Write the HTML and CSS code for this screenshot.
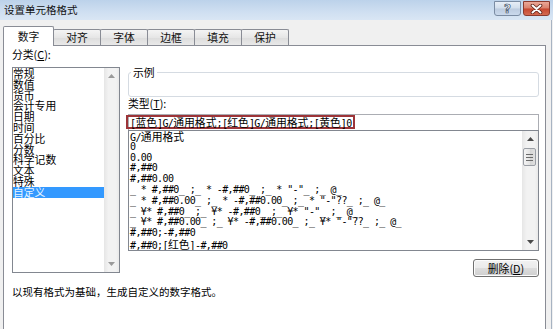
FILE: index.html
```html
<!DOCTYPE html>
<html>
<head>
<meta charset="utf-8">
<link rel="stylesheet" href="styles.css">
</head>
<body>
<div class="window">
  <div class="titlebar">
    <span class="title">设置单元格格式</span>
    <div class="tbtns">
      <div class="tbtn help"><span class="q">?</span></div>
      <div class="tbtn close">
        <svg width="13" height="10" viewBox="0 0 13 10"><path d="M2.5 1.5 L10.5 8.5 M10.5 1.5 L2.5 8.5" stroke="#5a1f16" stroke-width="3.6" stroke-linecap="round"/><path d="M2.5 1.5 L10.5 8.5 M10.5 1.5 L2.5 8.5" stroke="#ffffff" stroke-width="2" stroke-linecap="round"/></svg>
      </div>
    </div>
  </div>
  <div class="client">
    <div class="tabs">
      <div class="tab active">数字</div>
      <div class="tab">对齐</div>
      <div class="tab">字体</div>
      <div class="tab">边框</div>
      <div class="tab">填充</div>
      <div class="tab">保护</div>
    </div>
    <div class="panel">
      <div class="cols">
        <div class="left">
          <div class="label lbl-cat">分类(<u>C</u>):</div>
          <div class="listbox">
            <div class="items">
              <div class="item">常规</div>
              <div class="item">数值</div>
              <div class="item">货币</div>
              <div class="item">会计专用</div>
              <div class="item">日期</div>
              <div class="item">时间</div>
              <div class="item">百分比</div>
              <div class="item">分数</div>
              <div class="item">科学记数</div>
              <div class="item">文本</div>
              <div class="item">特殊</div>
              <div class="item selected">自定义</div>
            </div>
            <div class="vscroll narrow">
              <div class="arrow light"><svg width="7" height="4" viewBox="0 0 7 4"><path d="M0 4 L3.5 0 L7 4Z"/></svg></div>
              <div class="track"></div>
              <div class="arrow light"><svg width="7" height="4" viewBox="0 0 7 4"><path d="M0 0 L3.5 4 L7 0Z"/></svg></div>
            </div>
          </div>
        </div>
        <div class="right">
          <fieldset class="sample"><legend>示例</legend></fieldset>
          <div class="label lbl-type">类型(<u>T</u>):</div>
          <div class="input"><span class="sel">[<span class="c">蓝色</span>]G/<span class="c">通用格式</span>;[<span class="c">红色</span>]G/<span class="c">通用格式</span>;[<span class="c">黄色</span>]0</span></div>
          <div class="fmtlist">
            <div class="rows">
              <div class="row">G/<span class="c">通用格式</span></div>
              <div class="row">0</div>
              <div class="row">0.00</div>
              <div class="row">#,##0</div>
              <div class="row">#,##0.00</div>
              <div class="row">_ * #,##0_ ;_ * -#,##0_ ;_ * "-"_ ;_ @_ </div>
              <div class="row">_ * #,##0.00_ ;_ * -#,##0.00_ ;_ * "-"??_ ;_ @_ </div>
              <div class="row">_ ¥* #,##0_ ;_ ¥* -#,##0_ ;_ ¥* "-"_ ;_ @_ </div>
              <div class="row">_ ¥* #,##0.00_ ;_ ¥* -#,##0.00_ ;_ ¥* "-"??_ ;_ @_ </div>
              <div class="row">#,##0;-#,##0</div>
              <div class="row">#,##0;[<span class="c">红色</span>]-#,##0</div>
            </div>
            <div class="vscroll wide">
              <div class="arrow"><svg width="7" height="4" viewBox="0 0 7 4"><path d="M0 4 L3.5 0 L7 4Z"/></svg></div>
              <div class="track">
                <div class="thumb"><span></span><span></span><span></span></div>
              </div>
              <div class="arrow"><svg width="7" height="4" viewBox="0 0 7 4"><path d="M0 0 L3.5 4 L7 0Z"/></svg></div>
            </div>
          </div>
          <div class="btnrow"><div class="btn">删除(<u>D</u>)</div></div>
        </div>
      </div>
      <p class="hint">以现有格式为基础，生成自定义的数字格式。</p>
    </div>
  </div>
</div>
</body>
</html>
```
FILE: styles.css
```css
* { box-sizing: border-box; }
html, body { margin: 0; padding: 0; }
body {
  width: 553px;
  height: 329px;
  overflow: hidden;
  background: #f0f0f0;
  font-family: "Noto Sans CJK SC", sans-serif;
  font-size: 10.8px;
  color: #000;
}
.window {
  width: 553px;
  height: 329px;
  display: flex;
  flex-direction: column;
}
.titlebar {
  height: 20px;
  flex: none;
  display: flex;
  justify-content: space-between;
  align-items: flex-start;
  background: linear-gradient(#bcd2ea, #cfdff1 60%, #d9e6f4);
  padding: 0 3px 0 4px;
}
.title {
  font-size: 10.5px;
  line-height: 20px;
  color: #111;
}
.tbtns {
  display: flex;
  gap: 2px;
  margin-top: 1px;
}
.tbtn {
  width: 27px;
  height: 15px;
  border-radius: 0 0 3px 3px;
  display: flex;
  align-items: center;
  justify-content: center;
}
.help {
  border: 1px solid #7b8ca3;
  background: linear-gradient(#e7eef7, #d2deec 48%, #bccbdf 52%, #cad9ec);
}
.q {
  font-family: "DejaVu Sans", sans-serif;
  font-weight: bold;
  font-size: 12px;
  line-height: 12px;
  color: #f4f7fb;
  -webkit-text-stroke: 0.7px #3d4d63;
}
.close {
  border: 1px solid #8a3a2e;
  background: linear-gradient(#eaa898, #d9806c 48%, #c6462f 52%, #d46b52);
}
.client {
  flex: 1;
  display: flex;
  flex-direction: column;
  border-right: 1px solid #a7b3c2;
  width: 552px;
}
.tabs {
  height: 25px;
  flex: none;
  display: flex;
  align-items: flex-end;
  padding-left: 3px;
}
.tab {
  width: 48px;
  height: 16px;
  margin-left: -1px;
  border: 1px solid #898c95;
  border-bottom: none;
  border-radius: 2px 2px 0 0;
  background: linear-gradient(#f4f4f4, #e6e6e6 50%, #dcdcdc 51%, #e9e9e9);
  text-align: center;
  line-height: 15px;
  font-size: 10.8px;
  color: #111;
}
.tab.active {
  width: 51px;
  height: 20px;
  margin-left: 0;
  margin-bottom: -1px;
  background: #fff;
  position: relative;
  z-index: 1;
  line-height: 19px;
}
.tab.active + .tab { margin-left: -1px; }
.panel {
  flex: 1;
  margin-left: 3px;
  width: 543px;
  background: #fff;
  border: 1px solid #898c95;
  border-bottom: none;
  padding: 0 6px 0 8px;
}
.cols {
  display: flex;
  gap: 8px;
}
.left {
  width: 108px;
  flex: none;
}
.right {
  flex: 1;
  display: flex;
  flex-direction: column;
}
.label {
  line-height: 12px;
  height: 12px;
  white-space: nowrap;
}
.lbl-cat {
  margin-top: 2px;
  margin-bottom: 7px;
}
.listbox {
  height: 206px;
  border: 1px solid #828790;
  display: flex;
}
.items {
  flex: 1;
  padding-top: 0;
}
.item {
  height: 10.8px;
  line-height: 10.8px;
  white-space: nowrap;
}
.item.selected {
  background: #3399ff;
  color: #e8f6ff;
}
.vscroll {
  flex: none;
  display: flex;
  flex-direction: column;
  background: linear-gradient(90deg, #e6e6e6, #f2f2f2 30%, #f2f2f2 80%, #e9e9e9);
}
.vscroll.narrow { width: 15px; }
.vscroll.wide { width: 16px; }
.arrow {
  height: 16px;
  flex: none;
  display: flex;
  align-items: center;
  justify-content: center;
  fill: #4a4a4a;
}
.arrow.light { fill: #9a9a9a; }
.track {
  flex: 1;
  padding-top: 1px;
}
.thumb {
  margin: 0 2px 0 1px;
  height: 18px;
  border: 1px solid #9a9ea5;
  border-radius: 2px;
  background: linear-gradient(90deg, #f4f4f4, #e4e4e4 50%, #d4d4d4 51%, #e0e0e0);
  display: flex;
  flex-direction: column;
  align-items: center;
  justify-content: center;
  gap: 2px;
}
.thumb span {
  width: 7px;
  height: 1px;
  background: #6b6b6b;
}
.sample {
  margin: 20px 0 0;
  padding: 0 0 0 2px;
  height: 31px;
  border: 1px solid #d5dbe2;
  border-radius: 3px;
}
.sample legend {
  padding: 0 2px;
  line-height: 12px;
  font-size: 10.8px;
}
.lbl-type {
  margin-bottom: 5px;
}
.input {
  height: 16px;
  border: 1px solid #abadb3;
  border-bottom: none;
  display: flex;
  align-items: flex-start;
}
.sel {
  height: 14px;
  margin-left: -3px;
  border: 2px solid #9c3438;
  padding: 0 1px 0 2px;
  font-family: "DejaVu Sans Mono", monospace;
  font-size: 10px;
  letter-spacing: -0.6px;
  line-height: 10px;
  white-space: nowrap;
}
.c {
  font-family: "Noto Sans CJK SC", sans-serif;
  font-size: 10.8px;
  letter-spacing: 0;
}
.fmtlist {
  height: 121px;
  border: 1px solid #828790;
  display: flex;
}
.rows {
  flex: 1;
  overflow: hidden;
  padding-left: 1px;
  font-family: "DejaVu Sans Mono", monospace;
  font-size: 10px;
  letter-spacing: -0.6px;
}
.row {
  height: 10.8px;
  line-height: 10.8px;
  white-space: pre;
}
.btnrow {
  display: flex;
  justify-content: flex-end;
  margin-top: 8px;
}
.btn {
  width: 66px;
  height: 18px;
  border: 1px solid #707070;
  border-radius: 3px;
  background: linear-gradient(#f2f2f2, #ebebeb 50%, #dddddd 51%, #cfcfcf);
  box-shadow: inset 0 0 0 1px #fcfcfc;
  text-align: center;
  line-height: 16px;
  font-size: 10.8px;
}
.hint {
  margin: 9px 0 0;
  line-height: 12px;
  font-size: 10.5px;
}
```
